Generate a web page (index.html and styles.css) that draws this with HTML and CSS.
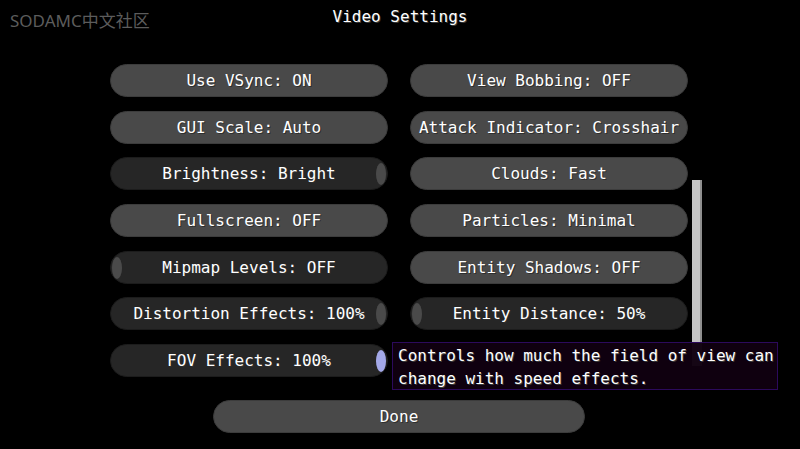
FILE: index.html
```html
<!DOCTYPE html>
<html lang="en">
<head>
    <meta charset="UTF-8">
    <title>Video Settings</title>
    <link rel="stylesheet" href="styles.css">
</head>
<body>
    <div class="screen">
        <div class="watermark">SODAMC中文社区</div>
        <h1 class="title">Video Settings</h1>

        <div class="options">
            <div class="btn">Use VSync: ON</div>
            <div class="btn">View Bobbing: OFF</div>
            <div class="btn">GUI Scale: Auto</div>
            <div class="btn">Attack Indicator: Crosshair</div>
            <div class="btn slider"><span class="knob knob-end"></span>Brightness: Bright</div>
            <div class="btn">Clouds: Fast</div>
            <div class="btn">Fullscreen: OFF</div>
            <div class="btn">Particles: Minimal</div>
            <div class="btn slider"><span class="knob knob-start"></span>Mipmap Levels: OFF</div>
            <div class="btn">Entity Shadows: OFF</div>
            <div class="btn slider"><span class="knob knob-end"></span>Distortion Effects: 100%</div>
            <div class="btn slider"><span class="knob knob-start"></span>Entity Distance: 50%</div>
            <div class="btn slider"><span class="knob knob-end knob-hover"></span>FOV Effects: 100%</div>
            <div class="btn btn-hidden"></div>
        </div>

        <div class="footer">
            <div class="btn btn-done">Done</div>
        </div>

        <div class="scrollbar"></div>

        <div class="tooltip">
            Controls how much the field of view can<br>
            change with speed effects.
        </div>
    </div>
</body>
</html>
```

FILE: styles.css
```css
body {
    margin: 0;
    background-color: #000;
    font-family: 'DejaVu Sans Mono', 'Liberation Mono', monospace;
    color: #fff;
}
.screen {
    position: relative;
    width: 800px;
    height: 449px;
    overflow: hidden;
}
.watermark {
    position: absolute;
    left: 10px;
    top: 7px;
    font-family: 'Noto Sans', 'Noto Sans CJK SC', sans-serif;
    font-size: 17px;
    color: #5c5c5c;
}
.title {
    margin: 0;
    padding-top: 6px;
    height: 64px;
    box-sizing: border-box;
    text-align: center;
    font-size: 16px;
    font-weight: normal;
    line-height: 22px;
    text-shadow: 1px 1px 0 #3a3a3a;
}
.options {
    display: grid;
    grid-template-columns: 278px 278px;
    grid-auto-rows: 33px;
    column-gap: 22px;
    row-gap: 13.67px;
    padding-left: 110px;
}
.btn {
    position: relative;
    display: flex;
    align-items: center;
    justify-content: center;
    background-color: #494949;
    border: 1px solid #3c3c3c;
    border-radius: 17px;
    box-sizing: border-box;
    font-size: 16px;
    white-space: nowrap;
    text-shadow: 1px 1px 0 #2e2e2e;
}
.slider {
    background-color: #262626;
    border-color: #1c1c1c;
}
.btn-hidden {
    visibility: hidden;
}
.knob {
    position: absolute;
    top: 5px;
    width: 10px;
    height: 22px;
    border-radius: 50%;
    background-color: #4a4a4a;
}
.knob-start {
    left: 1px;
}
.knob-end {
    right: 1px;
}
.knob-hover {
    background-color: #a3a8e8;
}
.footer {
    display: flex;
    justify-content: center;
    padding-top: 23px;
    padding-right: 2px;
}
.btn-done {
    width: 372px;
    height: 33px;
}
.scrollbar {
    position: absolute;
    left: 692px;
    top: 180px;
    width: 10px;
    height: 186px;
    background-color: #c4c4c4;
    border-right: 2px solid #8f8f8f;
    box-sizing: border-box;
}
.tooltip {
    position: absolute;
    left: 392px;
    top: 342px;
    width: 386px;
    height: 48px;
    box-sizing: border-box;
    padding: 1px 0 0 5px;
    background-color: rgba(16, 0, 16, 0.97);
    border: 1px solid #2c0a5c;
    font-size: 16px;
    line-height: 23px;
    white-space: nowrap;
    text-shadow: 1px 1px 0 #3a3a3a;
}
```
